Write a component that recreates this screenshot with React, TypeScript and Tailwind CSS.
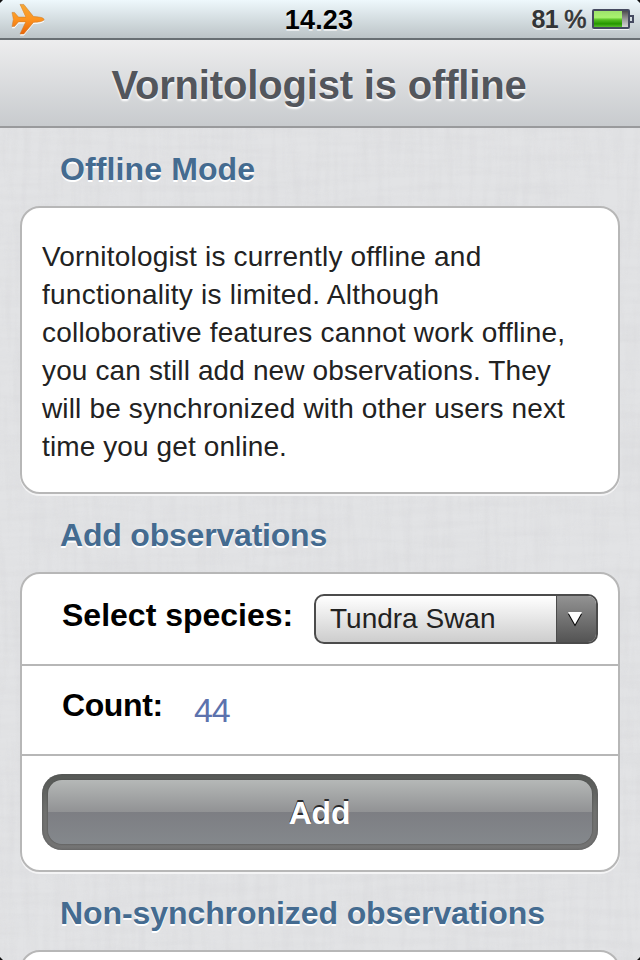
import type { ReactNode } from "react";

const lines = [
  { text: "Vornitologist is currently offline and", tracking: "tracking-[0.19px]" },
  { text: "functionality is limited. Although", tracking: "tracking-[0.24px]" },
  { text: "colloborative features cannot work offline,", tracking: "tracking-[0.2px]" },
  { text: "you can still add new observations. They", tracking: "tracking-[0.13px]" },
  { text: "will be synchronized with other users next", tracking: "tracking-[0.15px]" },
  { text: "time you get online.", tracking: "tracking-[0.11px]" },
];

function Linen() {
  return (
    <svg className="absolute inset-0 h-full w-full" aria-hidden="true">
      <filter id="warp" x="0" y="0" width="100%" height="100%">
        <feTurbulence type="fractalNoise" baseFrequency="0.13 0.012" numOctaves="3" seed="4" />
        <feColorMatrix values="0 0 0 0 0.62  0 0 0 0 0.62  0 0 0 0 0.64  0.9 0 0 0 -0.34" />
      </filter>
      <filter id="weft" x="0" y="0" width="100%" height="100%">
        <feTurbulence type="fractalNoise" baseFrequency="0.012 0.13" numOctaves="3" seed="9" />
        <feColorMatrix values="0 0 0 0 0.62  0 0 0 0 0.62  0 0 0 0 0.64  0.9 0 0 0 -0.34" />
      </filter>
      <rect width="100%" height="100%" filter="url(#warp)" opacity="0.45" />
      <rect width="100%" height="100%" filter="url(#weft)" opacity="0.4" />
    </svg>
  );
}

function StatusBar() {
  return (
    <div className="relative flex h-10 items-center justify-between border-b-2 border-b-[#686f73] bg-linear-to-b from-[#eef8fc] to-[#bcc4c7] pr-[6px] pl-[11px] text-[#333537]">
      <svg width="34" height="34" viewBox="0 0 34 34" aria-hidden="true">
        <defs>
          <linearGradient id="plane" x1="0" y1="0" x2="0" y2="1">
            <stop offset="0" stopColor="#f5a836" />
            <stop offset="0.5" stopColor="#fd9420" />
            <stop offset="1" stopColor="#ea6408" />
          </linearGradient>
        </defs>
        <path
          d="M1 10.400h2.500l4 4.700h7.200L9 2.400h3.800L22.500 14.600c4.500.1 10.200.8 10.600 2.900-.4 2.100-6.100 2.800-10.600 2.900L12.800 32H9l5.700-12.100H7.500L3.500 24.600H1l1.300-7.100z"
          fill="#fff"
          transform="translate(0 1.6)"
        />
        <path
          d="M1 10.400h2.500l4 4.700h7.200L9 2.400h3.800L22.500 14.600c4.500.1 10.200.8 10.600 2.900-.4 2.100-6.100 2.800-10.600 2.900L12.800 32H9l5.700-12.100H7.500L3.500 24.600H1l1.300-7.100z"
          fill="url(#plane)"
          stroke="#c4792b"
          strokeWidth="0.5"
        />
      </svg>
      <div className="absolute inset-x-0 top-[4px] pr-[2px] text-center text-[27px] leading-[32px] font-bold tracking-[0.2px] text-black [text-shadow:0_2px_0_#ffffffa0]">
        14.23
      </div>
      <div className="flex items-center gap-[6px]">
        <span className="text-[25px] leading-[32px] font-bold [text-shadow:0_2px_0_#ffffffa0]">
          <span className="tracking-[-0.5px]">81</span>
          <span className="ml-[6px] font-normal tracking-[-0.5px] [-webkit-text-stroke:0.7px_#333537]">%</span>
        </span>
        <svg width="42" height="22" viewBox="0 0 42 22" aria-hidden="true">
          <defs>
            <linearGradient id="charge" x1="0" y1="0" x2="0" y2="1">
              <stop offset="0" stopColor="#9ee36c" />
              <stop offset="0.4" stopColor="#a9f36f" />
              <stop offset="0.55" stopColor="#55bf22" />
              <stop offset="0.8" stopColor="#259600" />
              <stop offset="1" stopColor="#59bd2e" />
            </linearGradient>
            <linearGradient id="spent" x1="0" y1="0" x2="0" y2="1">
              <stop offset="0" stopColor="#444" />
              <stop offset="0.5" stopColor="#999" />
              <stop offset="1" stopColor="#ddd" />
            </linearGradient>
          </defs>
          <path d="M1 21h36" stroke="#fff" strokeWidth="2" opacity="0.8" />
          <rect x="1" y="2" width="36" height="18" rx="1" fill="url(#spent)" stroke="#454a60" strokeWidth="2" />
          <rect x="2" y="3" width="28" height="16" fill="url(#charge)" />
          <path d="M38 8h3v6h-3" fill="none" stroke="#454a60" strokeWidth="2" />
        </svg>
      </div>
    </div>
  );
}

function SectionTitle({ children, className }: { children: ReactNode; className: string }) {
  return (
    <h2 className={`mt-[22px] mb-[18px] pl-[60px] text-[32px] leading-[38px] font-bold whitespace-nowrap text-[#446b90] [text-shadow:0_2px_0_#fff] ${className}`}>
      {children}
    </h2>
  );
}

const card = "mx-5 rounded-[20px] border-2 border-[#b7b7b7] bg-white shadow-[0_2px_0_#f4f4f5]";

export default function App() {
  return (
    <div className="relative h-[960px] w-[640px] overflow-hidden bg-[#e2e3e5] font-['Liberation_Sans',Arial,sans-serif]">
      <Linen />
      <div className="relative flex flex-col">
        <StatusBar />
        <header className="flex h-[88px] items-center justify-center border-b-2 border-[#999a9c] bg-linear-to-b from-[#ededee] to-[#c8cbce]">
          <h1 className="pt-[3px] pr-[2px] text-[40px] leading-[48px] font-bold tracking-[-0.17px] whitespace-nowrap text-[#53565c] [text-shadow:0_2px_2px_#fff]">
            Vornitologist is offline
          </h1>
        </header>

        <SectionTitle className="tracking-[0.12px]">Offline Mode</SectionTitle>
        <section className={`h-[288px] px-5 pt-[30px] text-[28px] leading-[38px] text-[#222] ${card}`}>
          {lines.map((line) => (
            <p key={line.text} className={`whitespace-nowrap ${line.tracking}`}>{line.text}</p>
          ))}
        </section>

        <SectionTitle className="tracking-[-0.2px]">Add observations</SectionTitle>
        <section className={`h-[300px] ${card}`}>
          <div className="flex h-[92px] items-start border-b-2 border-[#b7b7b7] pr-5 pl-10">
            <label className="mt-[22px] flex-1 text-[32px] leading-[38px] font-bold whitespace-nowrap text-black">Select species:</label>
            <div className="mt-5 flex h-[50px] w-[284px] overflow-hidden rounded-[10px] border-2 border-[#4b4b4b] bg-linear-to-b from-white to-[#cdcdcd]">
              <span className="flex-1 pl-[14px] text-[28px] leading-[46px] whitespace-nowrap text-[#222]">Tundra Swan</span>
              <span className="flex w-10 items-center justify-center border-l border-[#4b4b4b] bg-linear-to-b from-[#939393] to-[#545454]">
                <svg width="16" height="16" viewBox="0 0 16 16" aria-hidden="true" className="mr-[3px]">
                  <path d="M1 3h14L8 15.500z" fill="#000" />
                  <path d="M1 1h14L8 13.500z" fill="#fff" />
                </svg>
              </span>
            </div>
          </div>
          <div className="flex h-[90px] items-start border-b-2 border-[#b7b7b7] pl-10">
            <label className="mt-5 w-[132px] text-[32px] leading-[38px] font-bold tracking-[-0.4px] text-black">Count:</label>
            <span className="mt-[25px] text-[34px] leading-[38px] tracking-[-1.2px] text-[#5c72ad]">44</span>
          </div>
          <div className="px-5 pt-[18px]">
            <button className="block h-[76px] w-full rounded-[20px] bg-linear-to-b from-[#565956] via-[#70716f] to-[#757575] p-[6px] shadow-[inset_0_0_3px_#555]">
              <span className="flex h-16 items-center justify-center rounded-[14px] bg-[linear-gradient(#b5b8b7_0%,#919294_50%,#7d7e83_50%,#84888c_100%)] pt-[2px] pr-px text-[32px] leading-[38px] font-bold tracking-[-0.2px] text-white shadow-[0_0_2px_#444] [text-shadow:0_-2px_0_#29292b]">
                Add
              </span>
            </button>
          </div>
        </section>

        <SectionTitle className="tracking-[-0.08px]">Non-synchronized observations</SectionTitle>
        <section className={`h-[80px] ${card}`} />
      </div>
      <svg className="absolute inset-0" width="640" height="960" aria-hidden="true">
        <path d="M0 0h3L0 3zM640 0h-3l3 3zM0 957v3h3zM640 957v3h-3z" fill="#111" />
      </svg>
    </div>
  );
}
